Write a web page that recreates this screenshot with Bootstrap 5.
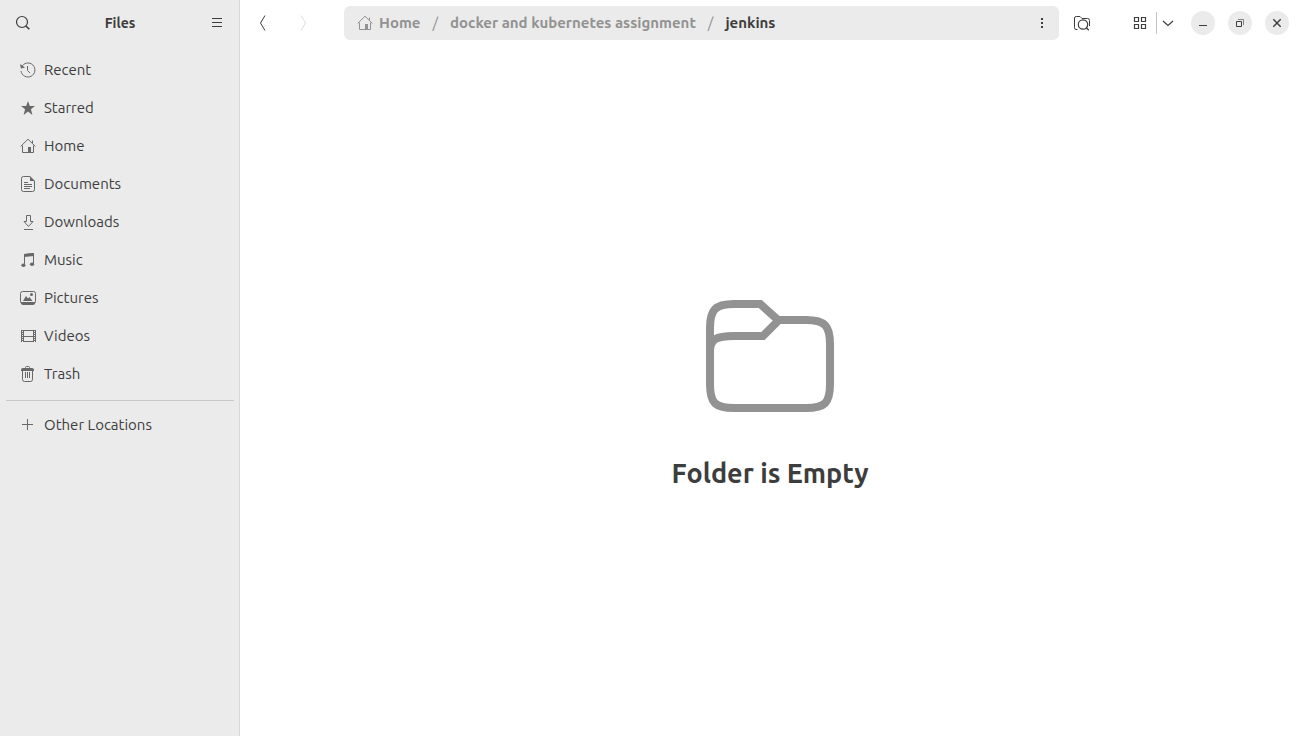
<!DOCTYPE html>
<html lang="en">
<head>
<meta charset="utf-8">
<meta name="viewport" content="width=device-width, initial-scale=1">
<title>Files</title>
<link href="https://cdn.jsdelivr.net/npm/bootstrap@5.3.0/dist/css/bootstrap.min.css" rel="stylesheet">
<style>
  body { font-family: Ubuntu, "Noto Sans", sans-serif; font-size: 15px; line-height: 20px; color: #3d3d3d; background: #fff; }
  .sidebar { width: 240px; background: #ebebeb; border-right: 1px solid #d8d8d8; }
  .bar { height: 46px; }
  .sidebar .bar { padding: 0 5px 0 6px; }
  .main-bar { padding: 0 11px 0 5px; }
  .bar-title { font-size: 14px; font-weight: 700; }
  .tool { width: 34px; height: 34px; padding: 0; border: 0; display: flex; align-items: center; justify-content: center; color: #3d3d3d; }
  .tool:disabled { color: #cfcfcf; border: 0; }
  .ico { width: 16px; height: 16px; flex: none; display: block; fill: none; stroke: currentColor; }
  .ico .solid { fill: currentColor; stroke: none; }
  .places { padding: 5px 5px 0 6px; }
  .place { height: 38px; padding: 0 14px; gap: 8px; border-radius: 6px; color: #3d3d3d; }
  .place .ico { color: #686868; }
  .places-rule { margin: 7px 0 5px; border-color: #c8c8c8; opacity: 1; }
  .pathbar { height: 34px; background: #ebebeb; border-radius: 6px; padding-left: 13px; margin: 0 6px 0 23px; }
  .pathbar .crumb { color: #929292; gap: 6px; }
  .pathbar .breadcrumb { --bs-breadcrumb-item-padding-x: 12px; --bs-breadcrumb-divider-color: #929292; font-weight: 600; }
  .pathbar .breadcrumb-item { display: flex; }
  .pathbar .breadcrumb-item::before { font-weight: 400; }
  .pathbar .breadcrumb-item.active { color: #3d3d3d; font-weight: 700; }
  .view-group { margin-left: 25px; }
  .view-grid { width: 32px; }
  .view-menu { width: 23px; border-left: 1px solid #c4c4c4; height: 22px; border-radius: 0; }
  .window-controls { gap: 13px; margin-left: 12px; }
  .window-btn { width: 24px; height: 24px; background: #ebebeb; }
  .empty-icon { width: 128px; height: 128px; fill: none; stroke: #929292; stroke-width: 8; }
  .empty-title { font-size: 27px; line-height: 34px; font-weight: 700; margin: 36px 0 0; }
</style>
</head>
<body>
<svg class="d-none" aria-hidden="true">
  <symbol id="home" viewBox="0 0 16 16">
    <path d="M.6 8.500 8 1.200 15.400 8.500M2.500 7.500v7h11v-7M12.500 5V2.500"/>
    <path fill="currentColor" stroke="none" d="M8 9h3v5.500H8z"/>
  </symbol>
</svg>
<div class="d-flex min-vh-100">
  <aside class="sidebar d-flex flex-column flex-shrink-0">
    <header class="bar d-flex align-items-center justify-content-between">
      <button class="btn tool" type="button" aria-label="Search"><svg class="ico" viewBox="0 0 16 16"><circle cx="7" cy="7" r="5.500" stroke-width="1.200"/><path stroke-width="1.600" d="m11 11 3.300 3.300"/></svg></button>
      <span class="bar-title">Files</span>
      <button class="btn tool" type="button" aria-label="Menu"><svg class="ico" viewBox="0 0 16 16"><path d="M3 3.500h10M3 7.500h10M3 11.500h10"/></svg></button>
    </header>
    <nav class="places" aria-label="Places">
      <a class="place d-flex align-items-center text-decoration-none" href="#"><svg class="ico" viewBox="0 0 16 16"><path d="M1.600 5A7 7 0 1 1 1 9M7.500 4v4.500L10 11"/><path class="solid" d="M0 2l1 4.500 4-1z"/></svg>Recent</a>
      <a class="place d-flex align-items-center text-decoration-none" href="#"><svg class="ico" viewBox="0 0 16 16"><path class="solid" d="m8 1 1.800 4.900 5.200.1-4.100 3.300L12.400 15 8 11.600 3.600 15l1.500-5.700L1 6l5.200-.1z"/></svg>Starred</a>
      <a class="place d-flex align-items-center text-decoration-none" href="#"><svg class="ico"><use href="#home"/></svg>Home</a>
      <a class="place d-flex align-items-center text-decoration-none" href="#"><svg class="ico" viewBox="0 0 16 16"><path d="M10 .5H3.500q-2 0-2 2v11q0 2 2 2h9q2 0 2-2V5M4 6.500h4M4 8.500h8M4 10.500h8M4 12.500h6"/><path class="solid" d="M10 0v5h5z"/></svg>Documents</a>
      <a class="place d-flex align-items-center text-decoration-none" href="#"><svg class="ico" viewBox="0 0 16 16"><path d="M6.500 1.500h4v6H13L8.500 12.500 4 7.500h2.500zM4 15.500h9"/></svg>Downloads</a>
      <a class="place d-flex align-items-center text-decoration-none" href="#"><svg class="ico" viewBox="0 0 16 16"><path d="M4.500 13V2.500l9-1V12"/><path class="solid" d="M4 2l10-1v3L4 5z"/><ellipse class="solid" cx="3.400" cy="13.300" rx="2.100" ry="1.700"/><ellipse class="solid" cx="12" cy="12.300" rx="2.100" ry="1.700"/></svg>Music</a>
      <a class="place d-flex align-items-center text-decoration-none" href="#"><svg class="ico" viewBox="0 0 16 16"><rect x=".5" y="1.500" width="15" height="12" rx="2"/><path class="solid" d="M1 12h14v1q0 2-2 2H3q-2 0-2-2zM3 11l3-5 2 2.500L9.500 7l3 4z"/><circle class="solid" cx="11.500" cy="4.500" r="1.500"/></svg>Pictures</a>
      <a class="place d-flex align-items-center text-decoration-none" href="#"><svg class="ico" viewBox="0 0 16 16"><path d="M3.500 2v12M13.500 2v12M3.500 2.500h10M3.500 8.500h10M3.500 13.500h10M1.500 2v12M15.500 2v12"/><path stroke-dasharray="1 1" d="M2.500 2v12M14.500 2v12"/></svg>Videos</a>
      <a class="place d-flex align-items-center text-decoration-none" href="#"><svg class="ico" viewBox="0 0 16 16"><path d="M2.500 4v9.500q0 2 2 2h6q2 0 2-2V4M5.500 6v6M7.500 6v6M9.500 6v6M5.500 2.500v-1q0-1 1-1h2q1 0 1 1v1"/><path class="solid" d="M3 2h9q2 0 2 2v1H1V4q0-2 2-2z"/></svg>Trash</a>
      <hr class="places-rule">
      <a class="place d-flex align-items-center text-decoration-none" href="#"><svg class="ico" viewBox="0 0 16 16"><path d="M7.500 2v11M2 7.500h11"/></svg>Other Locations</a>
    </nav>
  </aside>
  <main class="flex-grow-1 d-flex flex-column">
    <header class="bar main-bar d-flex align-items-center">
      <button class="btn tool me-2" type="button" aria-label="Back"><svg class="ico" viewBox="0 0 16 16"><path d="M11 .5 6.500 8l4.500 7.500"/></svg></button>
      <button class="btn tool" type="button" aria-label="Forward" disabled><svg class="ico" viewBox="0 0 16 16"><path d="M5 .5 9.500 8 5 15.500"/></svg></button>
      <nav class="pathbar flex-grow-1 d-flex align-items-center justify-content-between" aria-label="breadcrumb">
        <ol class="breadcrumb mb-0">
          <li class="breadcrumb-item"><a class="crumb d-flex align-items-center text-decoration-none" href="#"><svg class="ico"><use href="#home"/></svg>Home</a></li>
          <li class="breadcrumb-item"><a class="crumb text-decoration-none" href="#">docker and kubernetes assignment</a></li>
          <li class="breadcrumb-item active" aria-current="page">jenkins</li>
        </ol>
        <button class="btn tool" type="button" aria-label="Folder menu"><svg class="ico" viewBox="0 0 16 16"><path class="solid" d="M7 3h2v2H7zM7 7h2v2H7zM7 11h2v2H7z"/></svg></button>
      </nav>
      <button class="btn tool" type="button" aria-label="Search folder"><svg class="ico" viewBox="0 0 16 16"><path d="M3.500 14.500H2q-1.500 0-1.500-2V3Q.5 1.500 2.500 1.500h3.500L8 3.500h5.500q2 0 2 2V11"/><circle cx="9" cy="9.500" r="4.700" stroke-width="1.200"/><path stroke-width="1.400" d="m12.500 13 2.300 2.300"/></svg></button>
      <div class="view-group d-flex align-items-center">
        <button class="btn tool view-grid" type="button" aria-label="Grid view"><svg class="ico" viewBox="0 0 16 16"><path stroke-width="1.200" d="M2.500 2.500h4v4h-4zM9.500 2.500h4v4h-4zM2.500 9.500h4v4h-4zM9.500 9.500h4v4h-4z"/></svg></button>
        <button class="btn tool view-menu" type="button" aria-label="View options"><svg class="ico" viewBox="0 0 16 16"><path stroke-width="1.200" d="m3 6 5 4.500L13 6"/></svg></button>
      </div>
      <div class="d-flex window-controls">
        <button class="btn tool window-btn rounded-circle" type="button" aria-label="Minimize"><svg class="ico" viewBox="0 0 16 16"><path d="M4 10.500h8"/></svg></button>
        <button class="btn tool window-btn rounded-circle" type="button" aria-label="Restore"><svg class="ico" viewBox="0 0 16 16"><path d="M4.500 6.500h5v5h-5z"/><path stroke-opacity=".6" d="M6 4.500h5.500V10"/></svg></button>
        <button class="btn tool window-btn rounded-circle" type="button" aria-label="Close"><svg class="ico" viewBox="0 0 16 16"><path stroke-width="1.400" d="m4.300 4.300 7.400 7.400M11.700 4.300l-7.400 7.400"/></svg></button>
      </div>
    </header>
    <section class="flex-grow-1 d-flex flex-column align-items-center justify-content-center">
      <svg class="empty-icon" viewBox="0 0 128 128" aria-hidden="true"><path d="M4 60V36C4 18 9 12 28 12H54.300L72 28H100C119 28 124 34 124 52V92C124 111 119 116 100 116H28C9 116 4 111 4 92V36M4 64V60C4 47 10 44 28 44H57L74 27"/></svg>
      <h1 class="empty-title">Folder is Empty</h1>
    </section>
  </main>
</div>
<script src="https://cdn.jsdelivr.net/npm/bootstrap@5.3.0/dist/js/bootstrap.bundle.min.js"></script>
</body>
</html>
